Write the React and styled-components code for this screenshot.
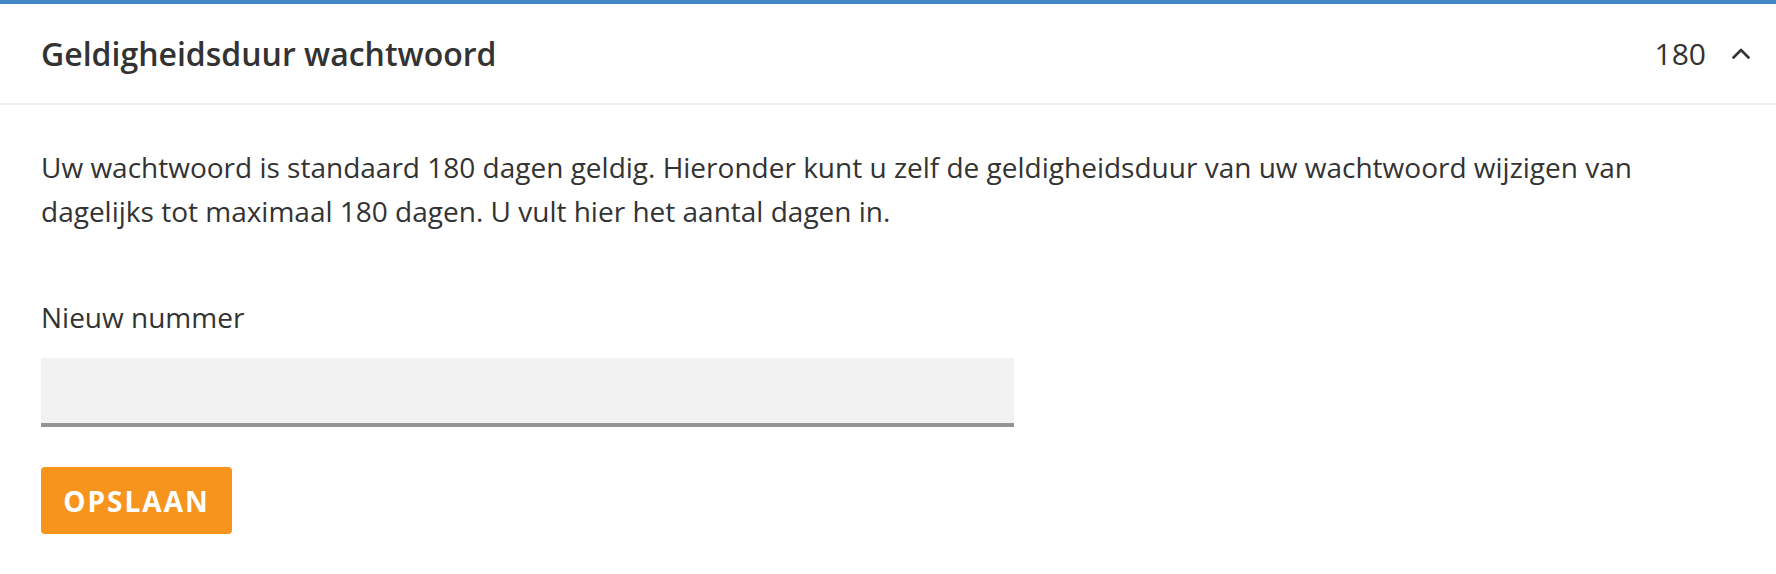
import React from "react";
import styled, { createGlobalStyle } from "styled-components";

const GlobalStyle = createGlobalStyle`
  html, body {
    margin: 0;
    padding: 0;
    background: #ffffff;
  }
  body {
    font-family: "Open Sans", "Noto Sans", sans-serif;
    color: #333333;
    -webkit-font-smoothing: antialiased;
  }
`;

const Panel = styled.section`
  border-top: 4px solid #4286c6;
  background: #ffffff;
`;

const Header = styled.header`
  display: flex;
  align-items: center;
  height: 99px;
  padding: 0 26px 0 41px;
  border-bottom: 2px solid #ededed;
`;

const Title = styled.h2`
  flex: 1;
  margin: 0;
  font-size: 32px;
  font-weight: 600;
  line-height: 38px;
  color: #333333;
`;

const Value = styled.span`
  font-size: 30px;
  font-weight: 400;
  line-height: 38px;
  color: #333333;
`;

const Toggle = styled.button`
  display: flex;
  align-items: center;
  justify-content: center;
  margin-left: 26px;
  padding: 0;
  border: 0;
  background: none;
  color: #333333;
  cursor: pointer;
`;

const Body = styled.div`
  padding: 40px 41px 40px 41px;
`;

const Intro = styled.p`
  margin: 0 0 62px;
  font-size: 28px;
  line-height: 44px;
`;

const Field = styled.div`
  display: flex;
  flex-direction: column;
  margin-bottom: 40px;
`;

const Label = styled.label`
  font-size: 28px;
  line-height: 44px;
  margin-bottom: 19px;
`;

const Input = styled.input`
  box-sizing: border-box;
  width: 973px;
  height: 69px;
  padding: 0 20px;
  border: 0;
  border-bottom: 4px solid #939393;
  background: #f2f2f2;
  font-family: inherit;
  font-size: 28px;
  color: #333333;
  outline: none;
`;

const SaveButton = styled.button`
  box-sizing: border-box;
  width: 191px;
  height: 67px;
  border: 0;
  border-radius: 4px;
  background: #f7941e;
  color: #ffffff;
  font-family: inherit;
  font-size: 28px;
  font-weight: 700;
  letter-spacing: 2px;
  text-transform: uppercase;
  cursor: pointer;
`;

function ChevronUp() {
  return (
    <svg width="18" height="11" viewBox="0 0 18 11" fill="none">
      <polyline
        points="1.5,9.5 9,2 16.5,9.5"
        stroke="currentColor"
        strokeWidth="2.6"
        strokeLinecap="round"
        strokeLinejoin="round"
      />
    </svg>
  );
}

export default function App() {
  return (
    <>
      <GlobalStyle />
      <Panel>
        <Header>
          <Title>Geldigheidsduur wachtwoord</Title>
          <Value>180</Value>
          <Toggle aria-label="Inklappen">
            <ChevronUp />
          </Toggle>
        </Header>
        <Body>
          <Intro>
            Uw wachtwoord is standaard 180 dagen geldig. Hieronder kunt u zelf de
            geldigheidsduur van uw wachtwoord wijzigen van dagelijks tot maximaal
            180 dagen. U vult hier het aantal dagen in.
          </Intro>
          <Field>
            <Label htmlFor="nieuw-nummer">Nieuw nummer</Label>
            <Input id="nieuw-nummer" type="text" />
          </Field>
          <SaveButton>Opslaan</SaveButton>
        </Body>
      </Panel>
    </>
  );
}
